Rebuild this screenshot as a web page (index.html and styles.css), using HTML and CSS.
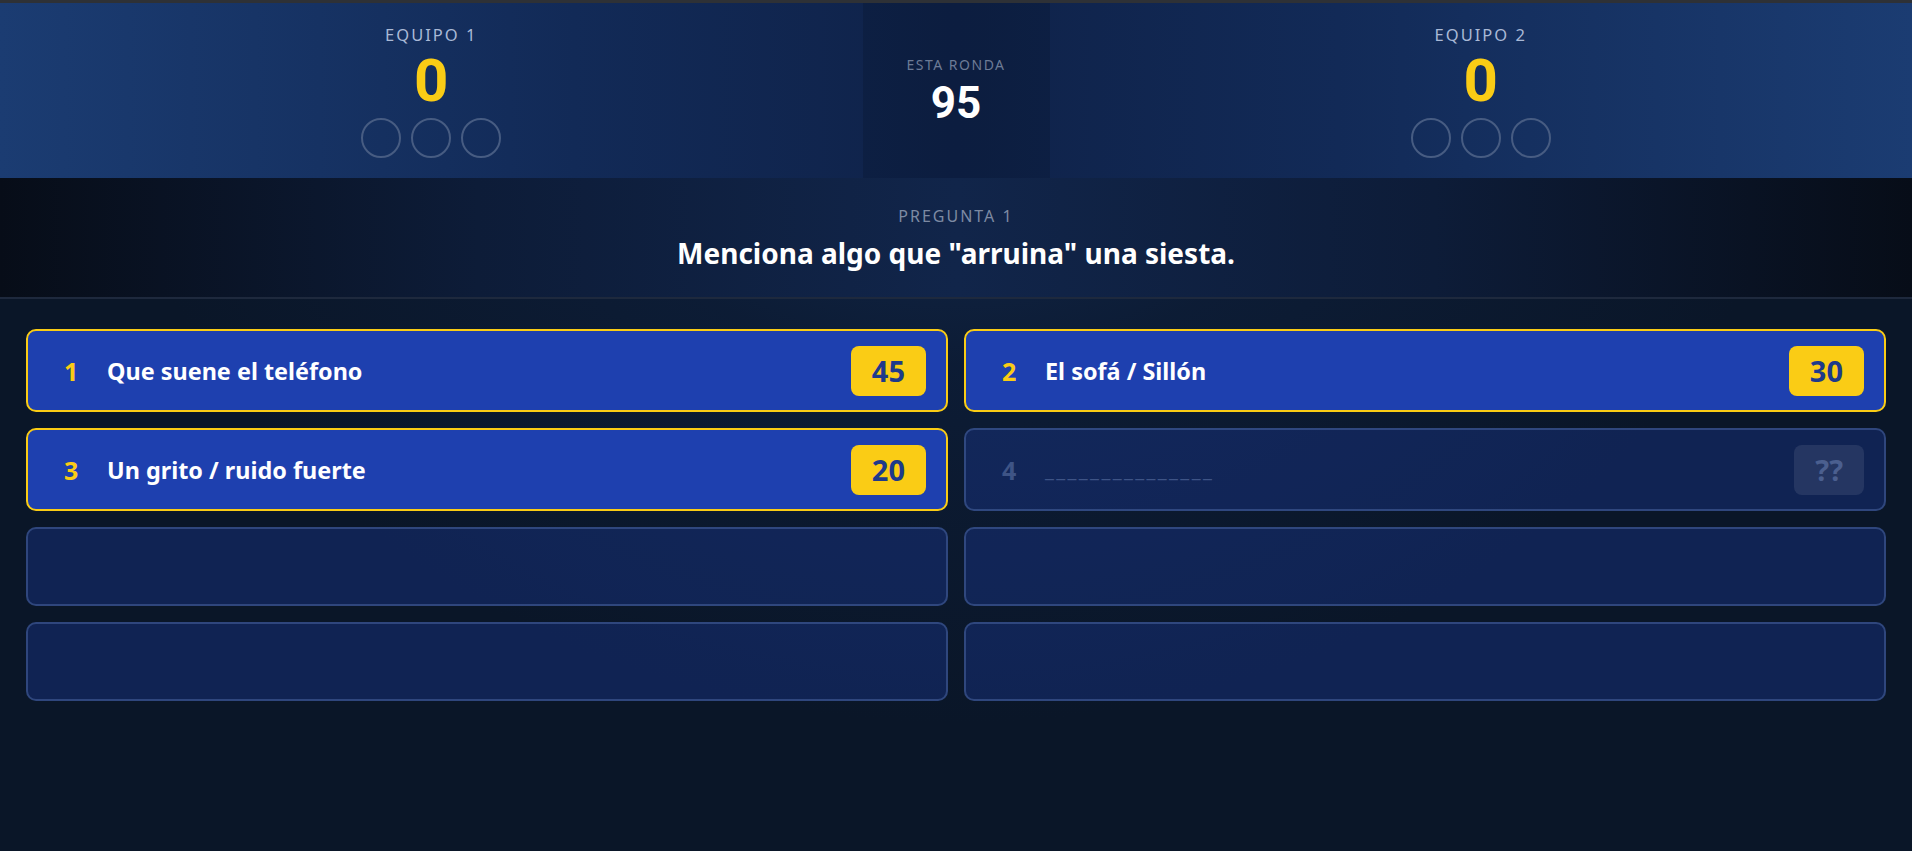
FILE: index.html
```html
<!DOCTYPE html>
<html lang="es">
<head>
<meta charset="utf-8">
<title>Pregunta 1</title>
<link rel="stylesheet" href="styles.css">
</head>
<body>
<div class="app">
  <header class="scoreboard">
    <div class="team">
      <div class="team-label">EQUIPO 1</div>
      <div class="team-score">0</div>
      <div class="strikes"><span class="strike"></span><span class="strike"></span><span class="strike"></span></div>
    </div>
    <div class="round">
      <div class="round-label">ESTA RONDA</div>
      <div class="round-score">95</div>
    </div>
    <div class="team">
      <div class="team-label">EQUIPO 2</div>
      <div class="team-score">0</div>
      <div class="strikes"><span class="strike"></span><span class="strike"></span><span class="strike"></span></div>
    </div>
  </header>

  <section class="question">
    <div class="q-label">PREGUNTA 1</div>
    <h1 class="q-text">Menciona algo que "arruina" una siesta.</h1>
  </section>

  <main class="board">
    <div class="card revealed"><span class="num">1</span><span class="answer">Que suene el teléfono</span><span class="pts">45</span></div>
    <div class="card revealed"><span class="num">2</span><span class="answer">El sofá / Sillón</span><span class="pts">30</span></div>
    <div class="card revealed"><span class="num">3</span><span class="answer">Un grito / ruido fuerte</span><span class="pts">20</span></div>
    <div class="card hidden"><span class="num">4</span><span class="answer">_______________</span><span class="pts">??</span></div>
    <div class="card empty"></div>
    <div class="card empty"></div>
    <div class="card empty"></div>
    <div class="card empty"></div>
  </main>
</div>
</body>
</html>
```

FILE: styles.css
```css
* { box-sizing: border-box; }

html, body {
  margin: 0;
  padding: 0;
  height: 100%;
}

body {
  font-family: "Noto Sans", Roboto, "DejaVu Sans", sans-serif;
  background: #0a1628;
  color: #fff;
  border-top: 3px solid #2e3136;
}

.app {
  min-height: calc(100vh - 3px);
  display: flex;
  flex-direction: column;
  background:
    radial-gradient(ellipse 45% 85% at 50% 0%, rgba(22, 48, 92, 0.95) 0%, rgba(14, 32, 62, 0.6) 50%, rgba(10, 22, 40, 0) 100%),
    #0a1628;
}

/* ---------- scoreboard ---------- */
.scoreboard {
  height: 175px;
  display: flex;
  background: linear-gradient(90deg, #1b3c72 0%, #122a57 30%, #0f2249 50%, #122a57 70%, #1b3c72 100%);
}

.team {
  flex: 1;
  display: flex;
  flex-direction: column;
  align-items: center;
  padding-top: 22px;
}

.team-label {
  font-size: 16.5px;
  line-height: 20px;
  letter-spacing: 2px;
  color: #a9b9d6;
}

.team-score {
  margin-top: 6px;
  font-family: Roboto, "Noto Sans", sans-serif;
  font-size: 60px;
  line-height: 60px;
  font-weight: 700;
  color: #facc15;
}

.strikes {
  margin-top: 7px;
  display: flex;
  gap: 10px;
}

.strike {
  width: 40px;
  height: 40px;
  border-radius: 50%;
  border: 2px solid #475c82;
}

.round {
  width: 187px;
  display: flex;
  flex-direction: column;
  align-items: center;
  justify-content: center;
  background: rgba(5, 14, 34, 0.22);
}

.round-label {
  font-size: 14px;
  line-height: 18px;
  letter-spacing: 1.5px;
  color: #6c7b96;
}

.round-score {
  margin-top: 7px;
  font-family: Roboto, "Noto Sans", sans-serif;
  font-size: 44px;
  line-height: 44px;
  font-weight: 700;
  color: #fff;
}

/* ---------- question ---------- */
.question {
  padding: 28px 20px 27px;
  text-align: center;
  background: linear-gradient(90deg, #070d18 0%, #0d1c38 25%, #11254a 50%, #0d1c38 75%, #070d18 100%);
  border-bottom: 2px solid #1e293d;
}

.q-label {
  font-size: 16px;
  line-height: 20px;
  letter-spacing: 2px;
  color: #7d8aa3;
}

.q-text {
  margin: 10px 0 0;
  font-size: 28px;
  line-height: 34px;
  font-weight: 700;
  color: #fff;
}

/* ---------- board ---------- */
.board {
  padding: 30px 26px 0;
  display: grid;
  grid-template-columns: 1fr 1fr;
  column-gap: 16px;
  row-gap: 16px;
  align-content: start;
}

.card {
  height: 83px;
  border-radius: 10px;
  border: 2px solid #2c4171;
  display: flex;
  align-items: center;
  padding: 0 20px 0 36px;
}

.card.revealed {
  background: #1e40af;
  border-color: #facc15;
}

.card.hidden,
.card.empty {
  background: rgba(30, 64, 175, 0.32);
  border-color: rgba(72, 100, 160, 0.55);
}

.card.empty {
  height: 79px;
}

.num {
  width: 28px;
  margin-right: 15px;
  font-size: 25px;
  font-weight: 700;
  color: #facc15;
}

.answer {
  flex: 1;
  font-size: 23.4px;
  font-weight: 700;
  color: #fff;
}

.pts {
  height: 50px;
  padding: 0 21px;
  border-radius: 8px;
  background: #facc15;
  color: #1e3a8a;
  font-size: 29px;
  font-weight: 700;
  display: flex;
  align-items: center;
  justify-content: center;
}

.card.hidden .num {
  color: #3e5486;
}

.card.hidden .answer {
  color: #3e5486;
  font-size: 20px;
  font-weight: 400;
  letter-spacing: 2.4px;
}

.card.hidden .pts {
  background: rgba(255, 255, 255, 0.09);
  color: #4b5f8f;
}
```
